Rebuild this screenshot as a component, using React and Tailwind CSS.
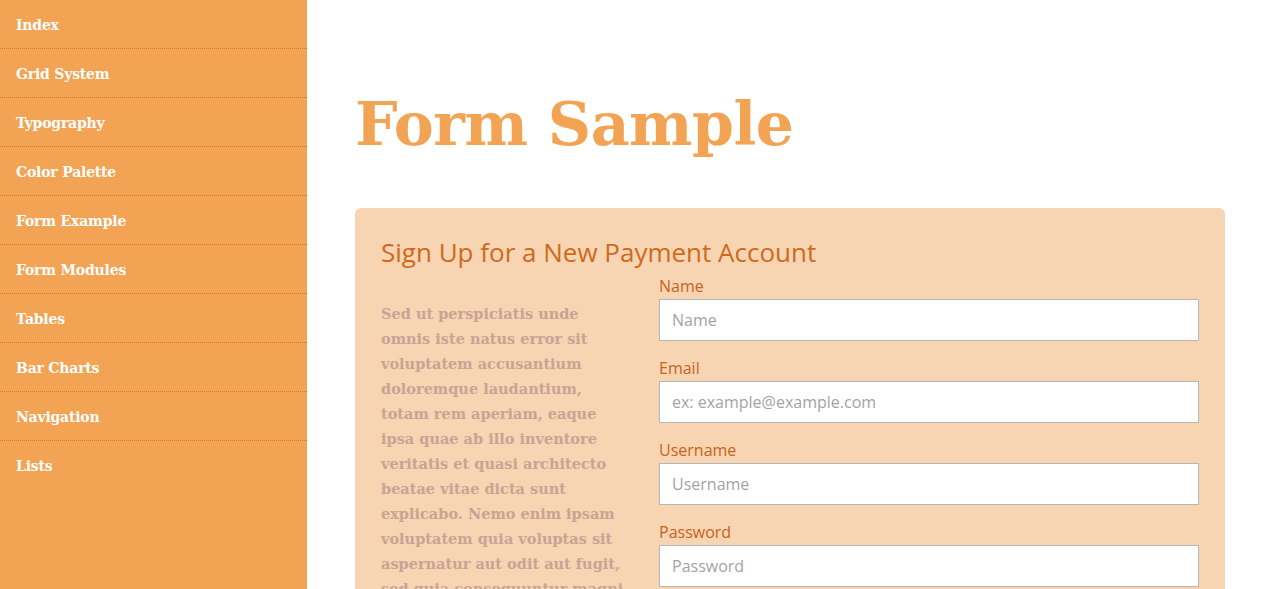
import React from "react";

const navItems = [
  "Index",
  "Grid System",
  "Typography",
  "Color Palette",
  "Form Example",
  "Form Modules",
  "Tables",
  "Bar Charts",
  "Navigation",
  "Lists",
];

const fields = [
  { label: "Name", placeholder: "Name", type: "text" },
  { label: "Email", placeholder: "ex: example@example.com", type: "email" },
  { label: "Username", placeholder: "Username", type: "text" },
  { label: "Password", placeholder: "Password", type: "password" },
];

const slab = { fontFamily: '"DejaVu Serif", "Liberation Serif", serif' };
const sans = { fontFamily: '"Open Sans", "Noto Sans", sans-serif' };

const App = () => {
  return (
    <div className="min-h-screen flex bg-white">
      <nav className="w-[307px] shrink-0 bg-[#f2a354]" style={slab}>
        {navItems.map((item, i) => (
          <a
            key={item}
            href="#"
            className={`block h-[49px] pl-4 pt-[15px] text-[14px] font-bold text-white tracking-[-0.2px] ${
              i < navItems.length - 1 ? "border-b border-dotted border-[#d6741c]" : ""
            }`}
          >
            {item}
          </a>
        ))}
      </nav>

      <main className="flex-1 pl-12 pr-[55px]">
        <h1
          className="mt-[82px] text-[60px] leading-[84px] font-bold text-[#f2a354] tracking-[-0.5px]"
          style={slab}
        >
          Form Sample
        </h1>

        <section className="mt-[42px] rounded-md bg-[#f7d4b2] px-[26px] pt-[26px] pb-10">
          <h2 className="text-[26px] leading-9 text-[#cf6a1d]" style={sans}>
            Sign Up for a New Payment Account
          </h2>

          <div className="flex gap-7">
            <p
              className="w-[250px] shrink-0 mt-[31px] text-[14.5px] leading-[25px] font-bold text-[#c9a394]"
              style={slab}
            >
              Sed ut perspiciatis unde omnis iste natus error sit voluptatem
              accusantium doloremque laudantium, totam rem aperiam, eaque ipsa
              quae ab illo inventore veritatis et quasi architecto beatae vitae
              dicta sunt explicabo. Nemo enim ipsam voluptatem quia voluptas sit
              aspernatur aut odit aut fugit, sed quia consequuntur magni dolores
              eos qui ratione voluptatem sequi nesciunt.
            </p>

            <form className="flex-1 mt-[6px] flex flex-col gap-[17px]" style={sans}>
              {fields.map((f) => (
                <label key={f.label} className="block">
                  <span className="block text-[16px] leading-[20px] text-[#c9621c]">
                    {f.label}
                  </span>
                  <input
                    type={f.type}
                    placeholder={f.placeholder}
                    className="mt-[3px] block w-full h-[42px] border border-[#b7b7b7] bg-white px-3 text-[16px] text-[#555] placeholder:text-[#a3a3a3] outline-none"
                  />
                </label>
              ))}
            </form>
          </div>
        </section>
      </main>
    </div>
  );
};

export default App;
